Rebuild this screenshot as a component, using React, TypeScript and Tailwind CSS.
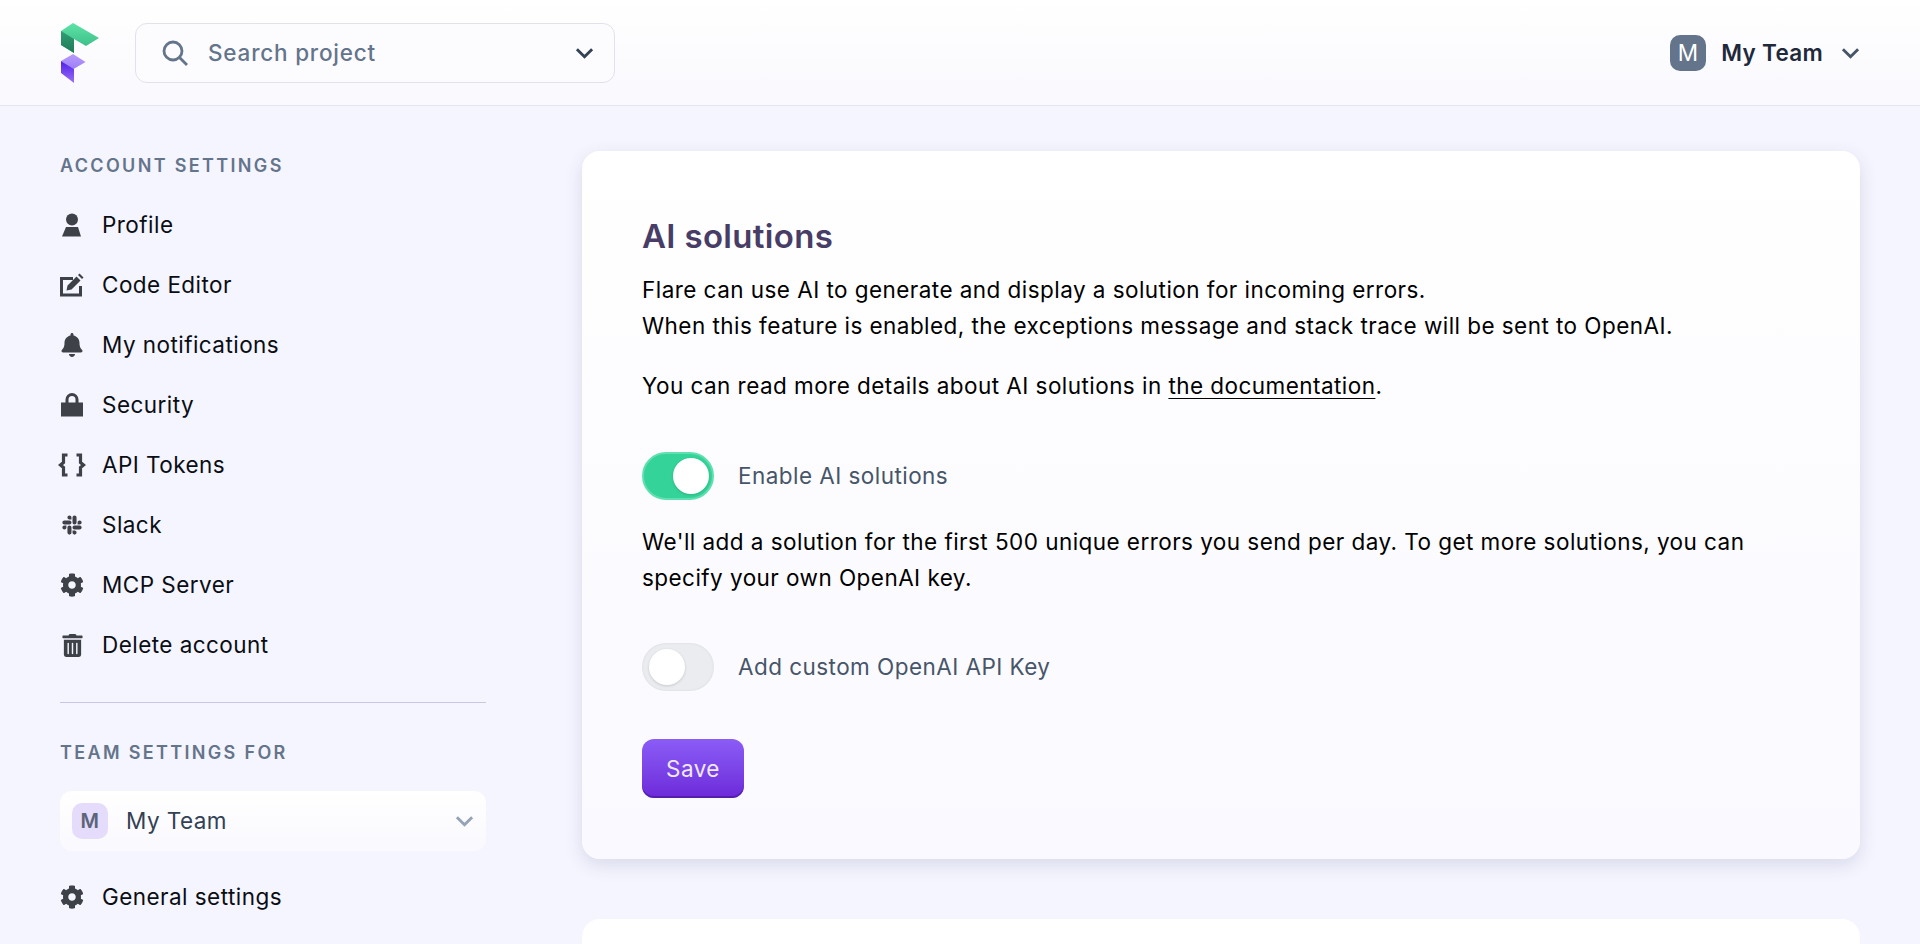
import React from "react";
import { FaBell, FaCog, FaSlack, FaTrashAlt } from "react-icons/fa";

const I = ({ children }: { children: React.ReactNode }) => (
  <span className="flex h-[24px] w-[24px] items-center justify-center text-[#3f4149]">{children}</span>
);

const Chevron = ({ className }: { className: string }) => (
  <svg viewBox="0 0 20 12" fill="none" stroke="currentColor" strokeWidth="3" className={className}>
    <path d="M2 2l8 8 8-8" />
  </svg>
);

const Person = () => (
  <svg viewBox="0 0 24 24" fill="currentColor" className="h-[24px] w-[24px]">
    <circle cx="12" cy="6.500" r="6" /><path d="M6 14h12l3 9.500H2z" />
  </svg>
);
const Edit = () => (
  <svg viewBox="0 0 24 24" fill="none" className="h-[24px] w-[24px]">
    <path d="M0 4h13v3H3V20.500h16V13h3v10.500H0z" fill="currentColor" />
    <path d="M6.500 17.500l1-5 9-9 4 4-9 9zM18 2l1.500-1.500 4 4L22 6z" fill="currentColor" />
  </svg>
);
const Lock = () => (
  <svg viewBox="0 0 24 24" className="h-[24px] w-[24px]">
    <path d="M1 9.500h22v14H1z" fill="currentColor" />
    <path d="M7 11V6.500a5 5 0 0110 0V11" fill="none" stroke="currentColor" strokeWidth="3" />
  </svg>
);
const Braces = () => (
  <svg viewBox="0 0 28 24" fill="none" stroke="currentColor" strokeWidth="3.200" className="h-[24px] w-[28px] shrink-0">
    <path d="M9.500 2H5.500v7.500L2.500 12l3 2.500V22h4M18.500 2h4v7.500l3 2.500-3 2.500V22h-4" />
  </svg>
);

const NavItem = ({ icon, label }: { icon: React.ReactNode; label: string }) => (
  <a className="flex h-[60px] items-center gap-[18px] text-[22.500px] text-[#0b0d14]">
    <I>{icon}</I>
    <span>{label}</span>
  </a>
);

const Toggle = ({ on }: { on?: boolean }) => (
  <span
    className={
      on
        ? "flex h-[48px] w-[72px] items-center justify-end rounded-full border-2 border-[#5fe0b0] bg-[#34d399] px-[3px]"
        : "flex h-[48px] w-[72px] items-center rounded-full bg-[#ebecf0] px-[7px] shadow-[inset_0_0_3px_rgba(0,0,0,0.08)]"
    }
  >
    <span className="h-[36px] w-[36px] rounded-full bg-white shadow-[0_1px_3px_rgba(0,0,0,0.15)]" />
  </span>
);

export default function App() {
  return (
    <div className="h-[944px] overflow-hidden bg-[#f4f5fe] font-['Inter',sans-serif] tracking-[0.45px]">
      <header className="flex h-[106px] items-center justify-between border-b border-[#e4e5ee] bg-gradient-to-b from-white to-[#f9f9fe] pl-[60px] pr-[60px]">
        <div className="flex items-center gap-[36px]">
          <svg viewBox="0 0 39 62" className="h-[62px] w-[39px]">
            <defs>
              <linearGradient id="g1" x1="0" y1="0" x2="0" y2="1"><stop offset="0" stopColor="#5de3a6" /><stop offset="1" stopColor="#36b583" /></linearGradient>
              <linearGradient id="g2" x1="0" y1="0" x2="0" y2="1"><stop offset="0" stopColor="#2f9e72" /><stop offset="1" stopColor="#1f7a5a" /></linearGradient>
              <linearGradient id="p1" x1="0" y1="0" x2="0" y2="1"><stop offset="0" stopColor="#b79cfb" /><stop offset="1" stopColor="#9d7ef8" /></linearGradient>
              <linearGradient id="p2" x1="0" y1="0" x2="0" y2="1"><stop offset="0" stopColor="#4f1fe8" /><stop offset="1" stopColor="#9a70f5" /></linearGradient>
            </defs>
            <path d="M13 1L39 16 26 24 14 17V31L1 23V9z" fill="url(#g1)" />
            <path d="M1 9l13 8v14L1 23z" fill="url(#g2)" />
            <path d="M13 32l12.500 8-12 7-12.500-8z" fill="url(#p1)" />
            <path d="M1 39l13 8v14L1 51z" fill="url(#p2)" />
          </svg>
          <div className="flex h-[60px] w-[480px] items-center rounded-[12px] border border-[#e1e2ea] bg-[#fcfcff] pl-[26px] pr-[20px]">
            <svg viewBox="0 0 26 26" fill="none" stroke="#64748b" strokeWidth="2.800" className="h-[26px] w-[26px]">
              <circle cx="11" cy="11" r="9" /><path d="M17.500 17.500L25 25" />
            </svg>
            <span className="ml-[20px] flex-1 text-[22.500px] font-medium tracking-[0.8px] text-[#64748b]">Search project</span>
            <Chevron className="h-[12px] w-[19px] text-[#334155]" />
          </div>
        </div>
        <div className="flex items-center">
          <span className="flex h-[36px] w-[36px] items-center justify-center rounded-[10px] bg-[#64748b] text-[22.500px] text-white">M</span>
          <span className="ml-[15px] text-[22.500px] font-semibold tracking-[0.3px] text-[#1e293b]">My Team</span>
          <Chevron className="ml-[18px] h-[12px] w-[19px] text-[#475569]" />
        </div>
      </header>
      <div className="flex items-start gap-[96px] px-[60px]">
        <aside className="w-[426px] shrink-0 pt-[48px]">
          <h3 className="mb-[17px] text-[18px] font-semibold uppercase leading-[24px] tracking-[0.13em] text-[#64748b]">Account settings</h3>
          <NavItem icon={<Person />} label="Profile" />
          <NavItem icon={<Edit />} label="Code Editor" />
          <NavItem icon={<FaBell size={24} />} label="My notifications" />
          <NavItem icon={<Lock />} label="Security" />
          <NavItem icon={<Braces />} label="API Tokens" />
          <NavItem icon={<FaSlack size={22} />} label="Slack" />
          <NavItem icon={<FaCog size={24} />} label="MCP Server" />
          <NavItem icon={<FaTrashAlt size={23} />} label="Delete account" />
          <div className="mt-[27px] border-t border-[#c9c6e4]" />
          <h3 className="mt-[38px] text-[18px] font-semibold uppercase leading-[24px] tracking-[0.13em] text-[#64748b]">Team settings for</h3>
          <div className="mt-[26px] flex h-[60px] items-center rounded-[12px] bg-gradient-to-b from-white to-[#f9f9fe] pl-[12px] pr-[12px]">
            <span className="flex h-[36px] w-[36px] items-center justify-center rounded-[10px] bg-[#e5dcfb] text-[20px] font-semibold text-[#5b6478]">M</span>
            <span className="ml-[18px] flex-1 text-[22.500px] text-[#334155]">My Team</span>
            <Chevron className="h-[12px] w-[19px] text-[#94a3b8]" />
          </div>
          <div className="mt-[16px]"><NavItem icon={<FaCog size={24} />} label="General settings" /></div>
        </aside>
        <main className="min-w-0 flex-1 pt-[45px]">
          <section className="rounded-[18px] bg-gradient-to-b from-white to-[#f9f9ff] px-[60px] pb-[61px] pt-[60px] shadow-[0_6px_18px_rgba(60,60,110,0.14)]">
            <h2 className="mt-[3px] text-[33px] font-semibold leading-[44px] tracking-[0.01em] text-[#483d66]">AI solutions</h2>
            <p className="mt-[14px] text-[22.500px] leading-[36px] text-black">
              Flare can use AI to generate and display a solution for incoming errors.<br />
              When this feature is enabled, the exceptions message and stack trace will be sent to OpenAI.
            </p>
            <p className="mt-[24px] text-[22.500px] leading-[36px] text-black">
              You can read more details about AI solutions in <a className="underline underline-offset-4 decoration-1">the documentation</a>.
            </p>
            <label className="mt-[48px] flex items-center gap-[24px]">
              <Toggle on />
              <span className="text-[22.500px] text-[#475569]">Enable AI solutions</span>
            </label>
            <p className="mt-[24px] text-[22.500px] leading-[36px] text-black">
              We'll add a solution for the first 500 unique errors you send per day. To get more solutions, you can specify your own OpenAI key.
            </p>
            <label className="mt-[47px] flex items-center gap-[24px]">
              <Toggle />
              <span className="text-[22.500px] text-[#475569]">Add custom OpenAI API Key</span>
            </label>
            <button className="mt-[48px] block h-[59px] rounded-[12px] bg-gradient-to-b from-[#8b5cf6] to-[#6d28d9] px-[24px] text-[22.500px] text-[#f0e8ff] shadow-[inset_0_-2px_0_rgba(60,20,130,0.5)]">Save</button>
          </section>
          <section className="mt-[60px] h-[300px] rounded-[18px] bg-white" />
        </main>
      </div>
    </div>
  );
}
